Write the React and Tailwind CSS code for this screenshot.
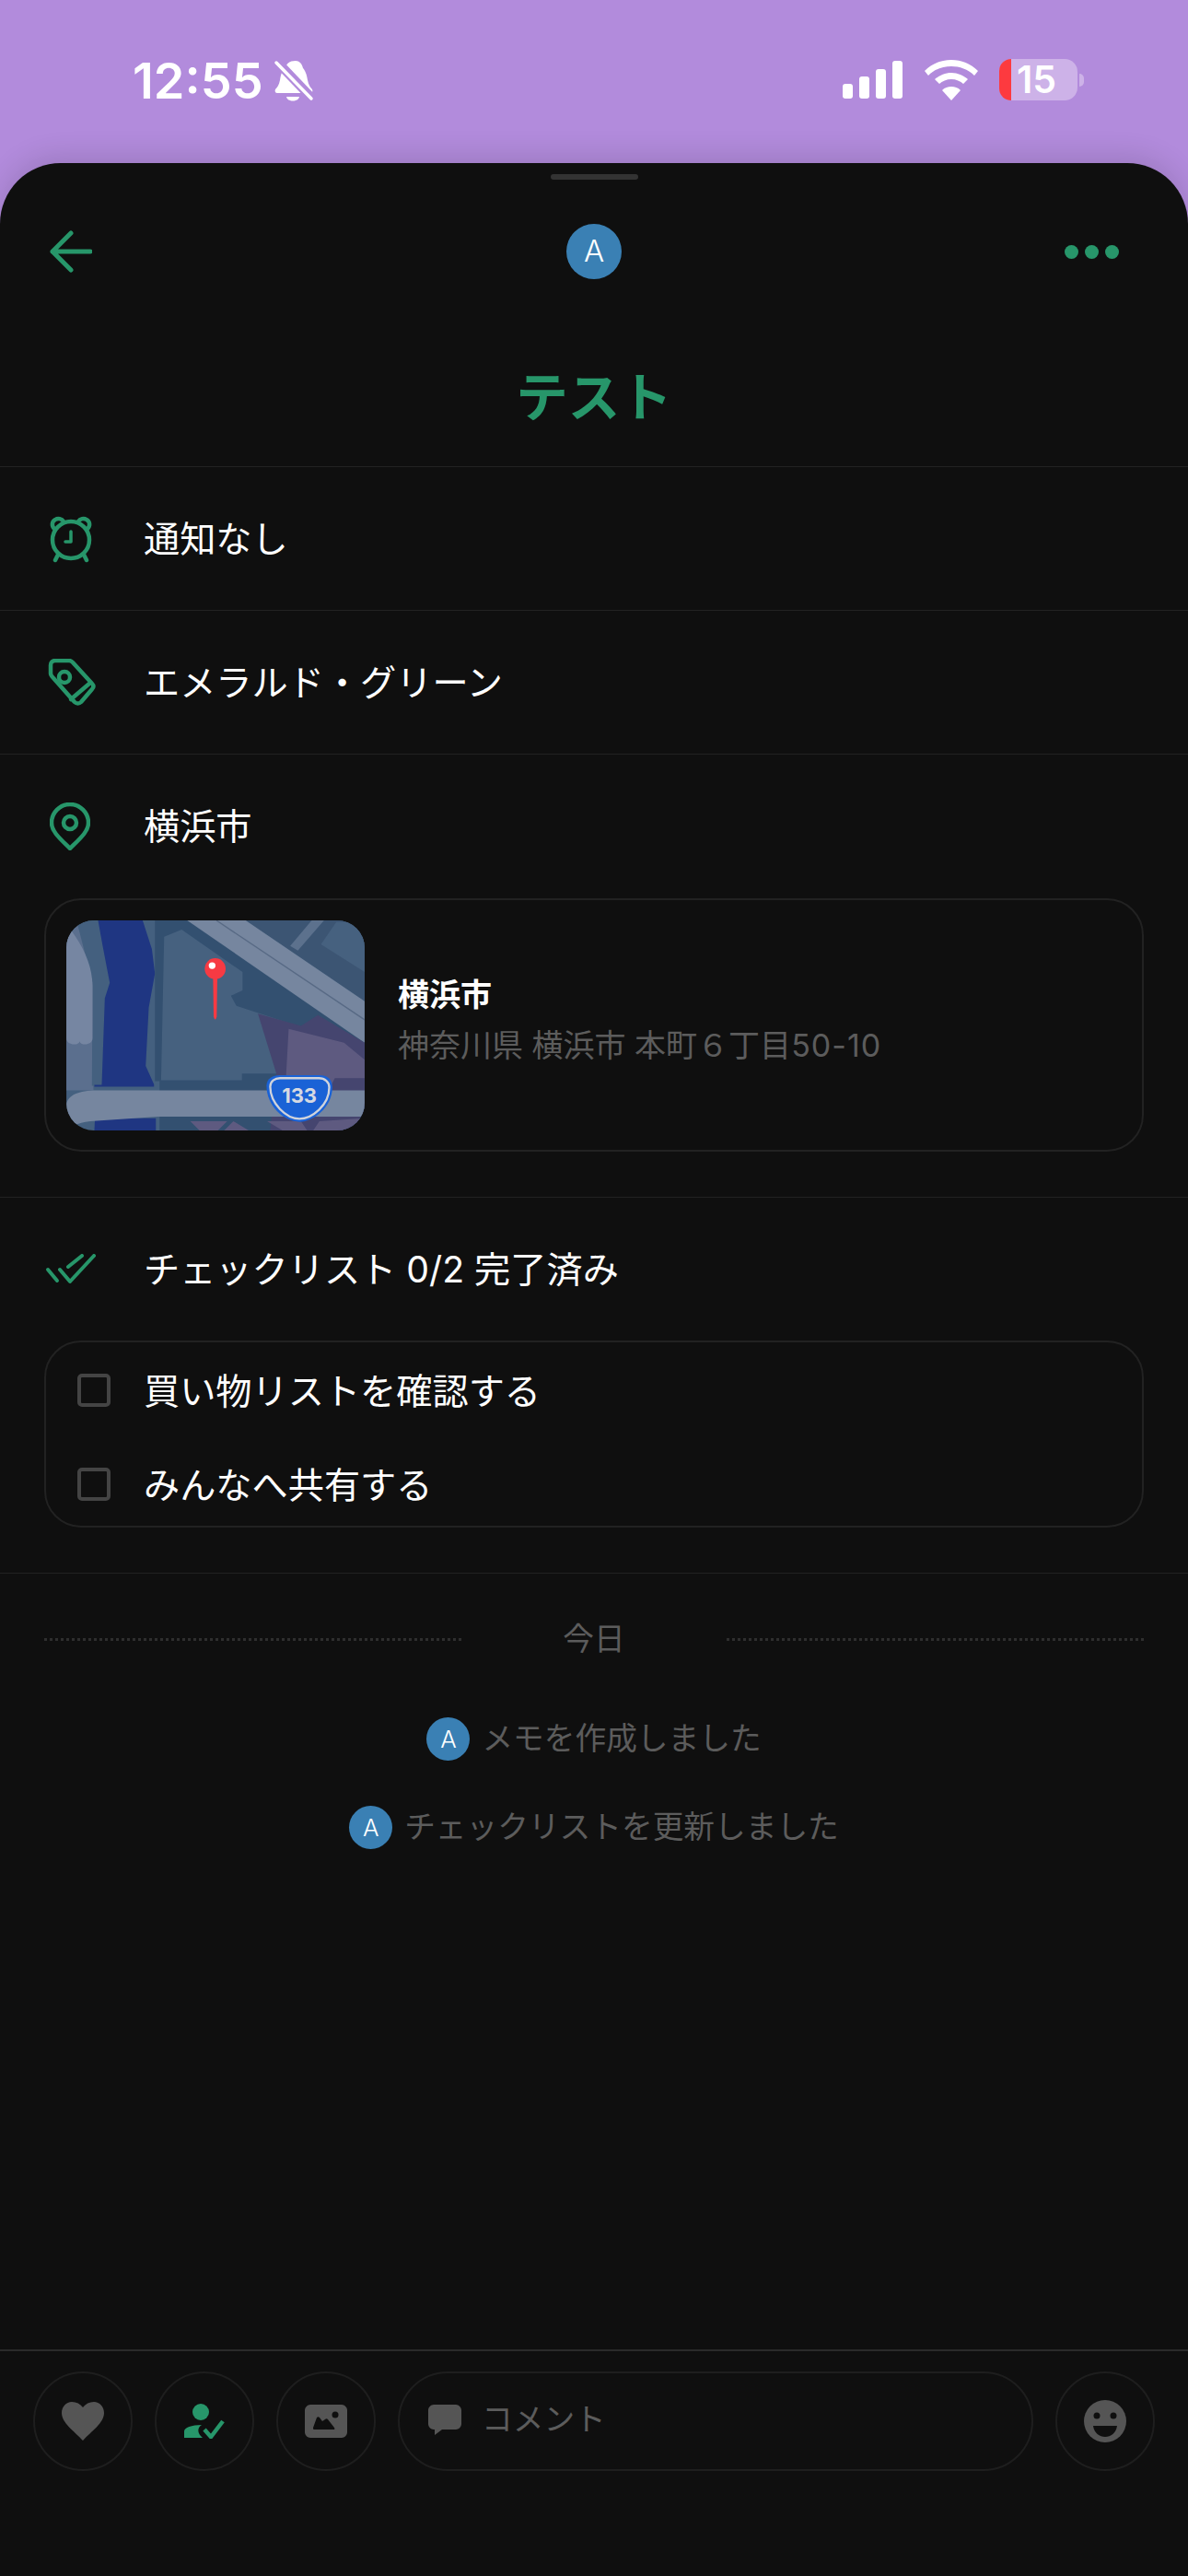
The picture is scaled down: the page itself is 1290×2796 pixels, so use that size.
import React from "react";

const green = "#27966a";
const font = { fontFamily: '"Inter", "Noto Sans CJK JP", sans-serif' };

function Avatar({ className }) {
  return (
    <div className={`flex items-center justify-center rounded-full bg-[#3a80b4] font-light text-white shrink-0 ${className}`}>A</div>
  );
}

function AlarmIcon() {
  return (
    <svg width="50" height="52" viewBox="0 0 50 52" fill="none" stroke={green} strokeWidth="4.5" strokeLinecap="round" strokeLinejoin="round">
      <circle cx="25" cy="27" r="20" />
      <path d="M7 15c-3-3-3-8 1-10 3-2 7-1 9 2M43 15c3-3 3-8-1-10-3-2-7-1-9 2" />
      <path d="M11 43l-3 6M39 43l3 6" />
      <path d="M25 18v11h-6" strokeWidth="3.5" />
    </svg>
  );
}

function TagIcon() {
  return (
    <svg width="52" height="52" viewBox="0 0 52 52" fill="none" stroke={green} strokeWidth="4.5" strokeLinecap="round" strokeLinejoin="round">
      <path d="M3 7c0-3 2-5 5-5h15c2 0 3 1 4 2l21 23c2 2 2 4 0 6L36 47c-2 2-5 2-7 0L6 21c-2-2-3-3-3-5z" />
      <circle cx="18" cy="20" r="6" />
      <path d="M45 27L25 44" />
    </svg>
  );
}

function PinIcon() {
  return (
    <svg width="44" height="52" viewBox="0 0 44 52" fill="none" stroke={green} strokeWidth="4.5" strokeLinejoin="round" className="ml-[2px]">
      <path d="M22 50C12 40 2 32 2 22 2 11 11 2 22 2s20 9 20 20c0 10-10 18-20 28z" />
      <circle cx="22" cy="22" r="7" />
    </svg>
  );
}

function DoubleCheckIcon() {
  return (
    <svg width="56" height="34" viewBox="0 0 56 34" fill="none" stroke={green} strokeWidth="4" strokeLinecap="round" strokeLinejoin="round" className="-ml-[3px]">
      <path d="M3 17l10 12" />
      <path d="M16 17l11 13 26-28" />
      <path d="M25 14L40 2" />
    </svg>
  );
}

function MapThumb() {
  return (
    <svg width="324" height="228" viewBox="97 117 970 683" className="rounded-[30px] shrink-0">
      <rect x="97" y="117" width="970" height="683" fill="#44607f" />
      <path d="M97 117H130L185 300V670H97z" fill="#5b6f8e" />
      <path d="M130 117H205L240 320L222 370L212 655H180L182 320z" fill="#44607f" />
      <path d="M97 130c50 60 85 130 85 200v170c0 25-40 25-42 10-2 15-43 15-43-10z" fill="#7686a2" />
      <path d="M200 117H345L375 210L385 290L365 400L355 590L382 650V658H188V652H212L222 370L238 320L215 200z" fill="#1f3682" />
      <path d="M190 760H388V800H188z" fill="#1f3682" />
      <path d="M385 117H490L1067 440V800H400V640H385z" fill="#335070" />
      <path d="M415 170L472 147L670 285V345L632 362L650 395L820 450L780 615H668V637H405z" fill="#46617f" />
      <path d="M680 117H1067V380z" fill="#3c5573" />
      <path d="M825 200L895 117H935L850 215z" fill="#5c718d" />
      <path d="M925 195L975 122H1067V285z" fill="#46617f" />
      <path d="M490 117H680L1067 380V515z" fill="#76869f" />
      <path d="M585 117L1067 440" stroke="#586a85" strokeWidth="4" />
      <path d="M720 420L860 460L915 425L1067 515V800H760L780 615z" fill="#45456f" />
      <path d="M820 470L1000 515L1067 570V630H970L960 650H810z" fill="#5e5a80" />
      <path d="M97 720C97 690 130 672 185 670H1067V755H395L175 770C130 775 110 790 100 800z" fill="#76869f" />
      <path d="M500 770H620L590 800H530zM640 770L690 800H610zM750 770H860L880 800H800zM920 770L1067 760V800H900z" fill="#5e5a80" />
      <path d="M748 655C748 630 770 620 790 620H920C945 620 962 632 962 660C962 725 900 772 855 772C805 772 748 720 748 655z" fill="#1a62d6" />
      <path d="M760 658C760 640 775 630 792 630H918C938 630 952 642 952 660C952 718 895 762 855 762C812 762 760 712 760 658z" fill="none" stroke="#cfd3dc" strokeWidth="7" />
      <text x="855" y="710" textAnchor="middle" fill="#d6d9e2" fontSize="66" fontWeight="700" fontFamily="Inter, sans-serif">133</text>
      <path d="M574 300H588L586 430Q581 448 576 430z" fill="#f73a43" />
      <circle cx="581" cy="274" r="34" fill="#f73a43" />
      <circle cx="571" cy="264" r="11" fill="#fff" />
    </svg>
  );
}

function Row({ icon, children }) {
  return (
    <div className="flex h-[155px] items-center">
      <div className="flex w-[156px] shrink-0 items-center pl-[52px]">{icon}</div>
      <span className="pt-[2px] text-[39.2px] text-white">{children}</span>
    </div>
  );
}

function Checkbox() {
  return <div className="h-[36px] w-[36px] shrink-0 rounded-[5px] border-[4px] border-[#444]" />;
}

function RoundButton({ children }) {
  return (
    <div className="flex h-[108px] w-[108px] shrink-0 items-center justify-center rounded-full border-2 border-[#1e1e1e]">
      {children}
    </div>
  );
}

export default function App() {
  return (
    <div className="flex h-[2796px] w-[1290px] flex-col overflow-hidden bg-[#b28bdc]" style={font}>
      {/* status bar */}
      <div className="flex h-[177px] shrink-0 items-start justify-between pl-[144px] pr-[113px] pt-[58px]">
        <div className="flex items-center gap-[11px]">
          <span className="text-[54px] font-semibold leading-[60px] text-white">12:55</span>
          <svg width="44" height="46" viewBox="0 0 44 46">
            <path d="M24 1c4 0 7 3 8 8 2 2 4 6 5 13 1 5 3 8 5 10 1 2 0 4-2 4H4c-2 0-3-2-2-4 2-2 4-5 5-10 1-8 3-11 6-13 1-5 4-8 11-8z" fill="#fff" />
            <path d="M14 40h14c-1 6-13 6-14 0z" fill="#fff" />
            <path d="M2 0l43 45" stroke="#b28bdc" strokeWidth="10" />
            <path d="M3 3l38 39" stroke="#fff" strokeWidth="3.5" strokeLinecap="round" />
          </svg>
        </div>
        <div className="flex items-center gap-[23px] pt-[6px]">
          <svg width="66" height="42" viewBox="0 0 66 42" fill="#fff">
            <rect x="0" y="25" width="11" height="16" rx="3" />
            <rect x="18" y="17" width="11" height="24" rx="3" />
            <rect x="36" y="9" width="11" height="32" rx="3" />
            <rect x="54" y="0" width="11" height="41" rx="3" />
          </svg>
          <svg width="58" height="44" viewBox="0 0 58 44" fill="#fff">
            <path d="M29 0c11 0 21 4 29 12l-4 5C47 10 38 7 29 7S11 10 4 17L0 12C8 4 18 0 29 0z" />
            <path d="M29 14c7 0 13 3 18 7l-5 5c-3-3-8-5-13-5s-10 2-13 5l-5-5c5-4 11-7 18-7z" />
            <path d="M29 29c4 0 7 1 10 4L29 44 19 33c3-3 6-4 10-4z" />
          </svg>
          <div className="flex items-center gap-[2px]">
            <div className="flex h-[45px] w-[85px] rounded-[14px] bg-[#cdb2e8]">
              <div className="h-full w-[13px] rounded-l-[14px] bg-[#fd3a3f]" />
              <span className="pl-[6px] text-[41px] font-semibold leading-[45px] text-white">15</span>
            </div>
            <div className="h-[14px] w-[5px] rounded-r-full bg-[#cdb2e8]" />
          </div>
        </div>
      </div>

      {/* sheet */}
      <div className="flex flex-1 flex-col rounded-t-[66px] bg-[#0f0f0f] shadow-[0_-8px_30px_rgba(0,0,0,0.12)]">
        <div className="mx-auto mt-[12px] h-[6px] w-[95px] shrink-0 rounded-full bg-[#333]" />

        <div className="mt-[48px] grid h-[60px] shrink-0 grid-cols-[1fr_60px_1fr] items-center">
          <svg width="46" height="46" viewBox="0 0 46 46" fill="none" stroke={green} strokeWidth="5" strokeLinecap="round" strokeLinejoin="round" className="ml-[54px]">
            <path d="M44 23H3M23 3L3 23l20 20" />
          </svg>
          <Avatar className="h-[60px] w-[60px] text-[33px]" />
          <div className="flex justify-end gap-[7px] pr-[75px]">
            <div className="h-[15px] w-[15px] rounded-full bg-[#27966a]" />
            <div className="h-[15px] w-[15px] rounded-full bg-[#27966a]" />
            <div className="h-[15px] w-[15px] rounded-full bg-[#27966a]" />
          </div>
        </div>

        <h1 className="mb-[49px] mt-[104px] text-center text-[56.5px] font-bold leading-[50px] text-[#27966a]">テスト</h1>

        <div className="border-t border-[#222]">
          <Row icon={<AlarmIcon />}>通知なし</Row>
        </div>
        <div className="border-t border-[#222]">
          <Row icon={<TagIcon />}>エメラルド・グリーン</Row>
        </div>
        <div className="border-t border-[#222] pb-[49px]">
          <Row icon={<PinIcon />}>横浜市</Row>
          <div className="mx-[48px] mt-[1px] flex h-[275px] items-center rounded-[40px] border-2 border-[#222] pl-[22px]">
            <MapThumb />
            <div className="mb-[10px] ml-[36px]">
              <div className="text-[34px] font-bold leading-[44px] text-white">横浜市</div>
              <div className="mt-[11px] text-[34px] leading-[44px] text-[#5c5c5c]">
                神奈川県 横浜市 本町６丁目<span className="tracking-[1px]">50-10</span>
              </div>
            </div>
          </div>
        </div>
        <div className="border-t border-[#222] pb-[49px]">
          <Row icon={<DoubleCheckIcon />}>チェックリスト 0/2 完了済み</Row>
          <div className="mx-[48px] flex h-[203px] flex-col gap-[54px] rounded-[40px] border-2 border-[#222] pl-[34px] pt-[28px]">
            <div className="flex h-[48px] items-center gap-[36px]">
              <Checkbox />
              <span className="pt-[2px] text-[39.2px] text-white">買い物リストを確認する</span>
            </div>
            <div className="flex h-[48px] items-center gap-[36px]">
              <Checkbox />
              <span className="pt-[2px] text-[39.2px] text-white">みんなへ共有する</span>
            </div>
          </div>
        </div>

        <div className="flex-1 border-t border-[#222] px-[48px] pt-[48px]">
          <div className="flex h-[46px] items-center justify-between">
            <div className="w-[453px] border-t-[3px] border-dotted border-[#2e2e2e]" />
            <span className="text-[33.7px] text-[#5c5c5c]">今日</span>
            <div className="w-[453px] border-t-[3px] border-dotted border-[#2e2e2e]" />
          </div>
          <div className="mt-[62px] flex h-[47px] items-center justify-center gap-[13px]">
            <Avatar className="h-[47px] w-[47px] text-[26px]" />
            <span className="text-[33.7px] text-[#5c5c5c]">メモを作成しました</span>
          </div>
          <div className="mt-[49px] flex h-[47px] items-center justify-center gap-[13px]">
            <Avatar className="h-[47px] w-[47px] text-[26px]" />
            <span className="text-[33.7px] text-[#5c5c5c]">チェックリストを更新しました</span>
          </div>
        </div>

        <div className="flex h-[246px] shrink-0 items-start gap-[24px] border-t-2 border-[#2a2a2a] px-[36px] pt-[22px]">
          <RoundButton>
            <svg width="46" height="42" viewBox="0 0 46 42" fill="#555">
              <path d="M23 42C14 32 0 23 0 12 0 5 5 0 11 0c5 0 9 2 12 6 3-4 7-6 12-6 6 0 11 5 11 12 0 11-14 20-23 30z" />
            </svg>
          </RoundButton>
          <RoundButton>
            <svg width="44" height="38" viewBox="0 0 44 38" fill="none">
              <circle cx="18" cy="9" r="9" fill={green} />
              <path d="M0 37V30C0 26 8 23 19 23C14 26 14 32 20 37z" fill={green} />
              <path d="M22 28l7 8 13-17" stroke={green} strokeWidth="4.5" />
            </svg>
          </RoundButton>
          <RoundButton>
            <svg width="46" height="36" viewBox="0 0 46 36" fill="#555">
              <path d="M6 0h34c3 0 6 3 6 6v24c0 3-3 6-6 6H6c-3 0-6-3-6-6V6c0-3 3-6 6-6z" />
              <path d="M10 27c-1 0-1-1-1-2l4-11c1-1 2-1 3 0l3 4 3-2c1-1 2-1 3 0l7 9c1 2 0 2-1 2z" fill="#0f0f0f" />
              <circle cx="33" cy="11" r="3.5" fill="#0f0f0f" />
            </svg>
          </RoundButton>
          <div className="flex h-[108px] flex-1 items-center rounded-full border-2 border-[#1e1e1e] pb-[4px] pl-[31px]">
            <svg width="36" height="33" viewBox="0 0 36 33" fill="#555" className="shrink-0">
              <path d="M6 0h24c3 0 6 3 6 6v15c0 3-3 6-6 6H15l-8 6v-6H6c-3 0-6-3-6-6V6c0-3 3-6 6-6z" />
            </svg>
            <span className="ml-[22px] text-[33.7px] text-[#5c5c5c]">コメント</span>
          </div>
          <RoundButton>
            <svg width="46" height="46" viewBox="0 0 46 46">
              <circle cx="23" cy="23" r="23" fill="#555" />
              <circle cx="14" cy="17" r="3.5" fill="#0f0f0f" />
              <circle cx="32" cy="17" r="3.5" fill="#0f0f0f" />
              <path d="M10 28h26c-1 8-7 12-13 12S11 36 10 28z" fill="#0f0f0f" />
            </svg>
          </RoundButton>
        </div>
      </div>
    </div>
  );
}
